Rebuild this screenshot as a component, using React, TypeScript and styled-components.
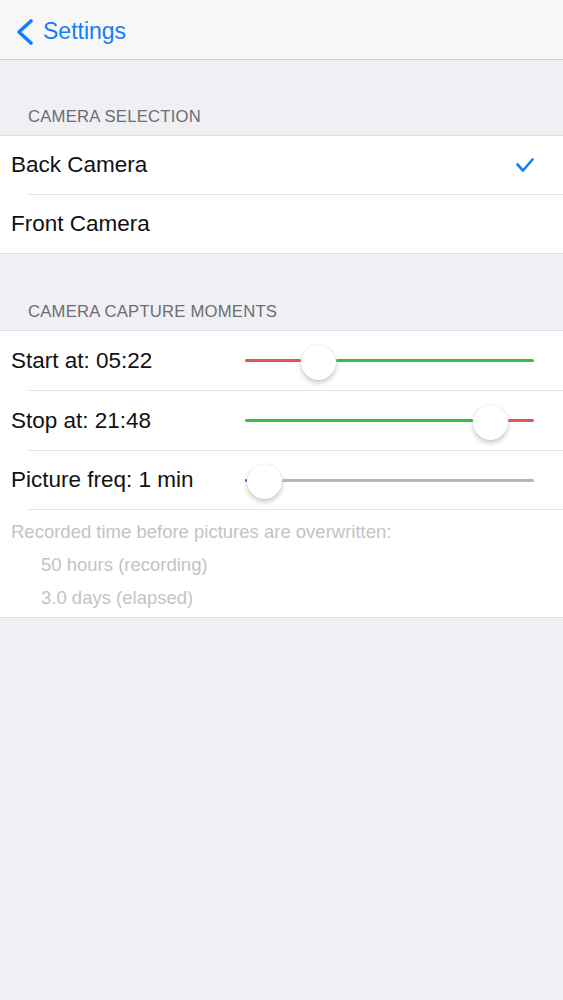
import React from "react";
import styled, { createGlobalStyle } from "styled-components";

const GlobalStyle = createGlobalStyle`
  html, body {
    margin: 0;
    padding: 0;
    background: #efeff4;
  }
  body {
    font-family: "Liberation Sans", Helvetica, Arial, sans-serif;
    -webkit-font-smoothing: antialiased;
  }
`;

const Page = styled.div`
  width: 563px;
  min-height: 1000px;
  background: #efeff4;
  display: flex;
  flex-direction: column;
`;

const NavBar = styled.header`
  height: 59px;
  background: #f7f7f7;
  border-bottom: 1px solid #d3d3d6;
  display: flex;
  align-items: center;
  padding-left: 15px;
  gap: 8px;
`;

const ChevronWrap = styled.span`
  display: flex;
  margin-top: 5px;
`;

const BackLabel = styled.span`
  font-size: 23px;
  color: #147efb;
  line-height: 1;
  margin-top: 3px;
`;

const SectionHeader = styled.div<{ $h: number }>`
  height: ${(p) => p.$h}px;
  box-sizing: border-box;
  display: flex;
  align-items: flex-end;
  padding: 0 0 8px 28px;
  font-size: 16.7px;
  line-height: 20px;
  color: #6d6d72;
  letter-spacing: 0.2px;
`;

const Group = styled.section`
  background: #fff;
  border-top: 1px solid #dedee2;
  border-bottom: 1px solid #dedee2;
  display: flex;
  flex-direction: column;
`;

const Row = styled.div<{ $h: number }>`
  height: ${(p) => p.$h}px;
  display: flex;
  align-items: center;
  justify-content: space-between;
  padding: 0 29px 0 11px;
`;

const Separator = styled.div`
  height: 1px;
  margin-left: 28px;
  background: #e4e4e7;
`;

const Label = styled.span`
  font-size: 22.5px;
  color: #111;
  white-space: nowrap;
`;

const SliderTrack = styled.div`
  width: 289px;
  height: 40px;
  display: flex;
  align-items: center;
  flex-shrink: 0;
`;

const TrackLine = styled.div<{ $color: string; $grow?: boolean }>`
  height: 3px;
  background: ${(p) => p.$color};
  flex: ${(p) => (p.$grow ? "1 1 auto" : "0 0 auto")};
  border-radius: 1.5px;
`;

const Thumb = styled.div`
  width: 35px;
  height: 35px;
  border-radius: 50%;
  background: #fff;
  flex: 0 0 auto;
  margin-top: 3px;
  box-shadow: 0 3px 5px rgba(0, 0, 0, 0.2), 0 0 0 0.5px rgba(0, 0, 0, 0.08);
`;

const Footer = styled.div`
  padding: 5px 11px 3px;
  display: flex;
  flex-direction: column;
  font-size: 18.5px;
  line-height: 33px;
  color: #c3c3c6;
`;

const FooterLine = styled.div<{ $indent?: boolean }>`
  padding-left: ${(p) => (p.$indent ? "30px" : "0")};
  white-space: nowrap;
`;

const Chevron = () => (
  <svg width="20" height="28" viewBox="0 0 20 28">
    <polyline
      points="16,3 4,14 16,25"
      fill="none"
      stroke="#147efb"
      strokeWidth="3.6"
      strokeLinecap="round"
      strokeLinejoin="round"
    />
  </svg>
);

const Check = () => (
  <svg width="18" height="15" viewBox="0 0 18 15">
    <polyline
      points="1.5,6.5 7,12.5 16.5,1.5"
      fill="none"
      stroke="#147efb"
      strokeWidth="2.6"
      strokeLinecap="round"
      strokeLinejoin="round"
    />
  </svg>
);

type SliderProps = { minPx: number; minColor: string; maxColor: string };

const Slider = ({ minPx, minColor, maxColor }: SliderProps) => (
  <SliderTrack>
    <TrackLine $color={minColor} style={{ width: minPx }} />
    <Thumb />
    <TrackLine $color={maxColor} $grow />
  </SliderTrack>
);

export default function App() {
  return (
    <Page>
      <GlobalStyle />
      <NavBar>
        <ChevronWrap>
          <Chevron />
        </ChevronWrap>
        <BackLabel>Settings</BackLabel>
      </NavBar>

      <SectionHeader $h={75}>CAMERA SELECTION</SectionHeader>
      <Group>
        <Row $h={58}>
          <Label>Back Camera</Label>
          <Check />
        </Row>
        <Separator />
        <Row $h={58}>
          <Label>Front Camera</Label>
        </Row>
      </Group>

      <SectionHeader $h={76}>CAMERA CAPTURE MOMENTS</SectionHeader>
      <Group>
        <Row $h={59}>
          <Label>Start at: 05:22</Label>
          <Slider minPx={56} minColor="#e05555" maxColor="#3cbb48" />
        </Row>
        <Separator />
        <Row $h={59}>
          <Label>Stop at: 21:48</Label>
          <Slider minPx={228} minColor="#3cbb48" maxColor="#e05555" />
        </Row>
        <Separator />
        <Row $h={58}>
          <Label>Picture freq: 1 min</Label>
          <Slider minPx={2} minColor="#147efb" maxColor="#b6b6b9" />
        </Row>
        <Separator />
        <Footer>
          <FooterLine>Recorded time before pictures are overwritten:</FooterLine>
          <FooterLine $indent>50 hours (recording)</FooterLine>
          <FooterLine $indent>3.0 days (elapsed)</FooterLine>
        </Footer>
      </Group>
    </Page>
  );
}
